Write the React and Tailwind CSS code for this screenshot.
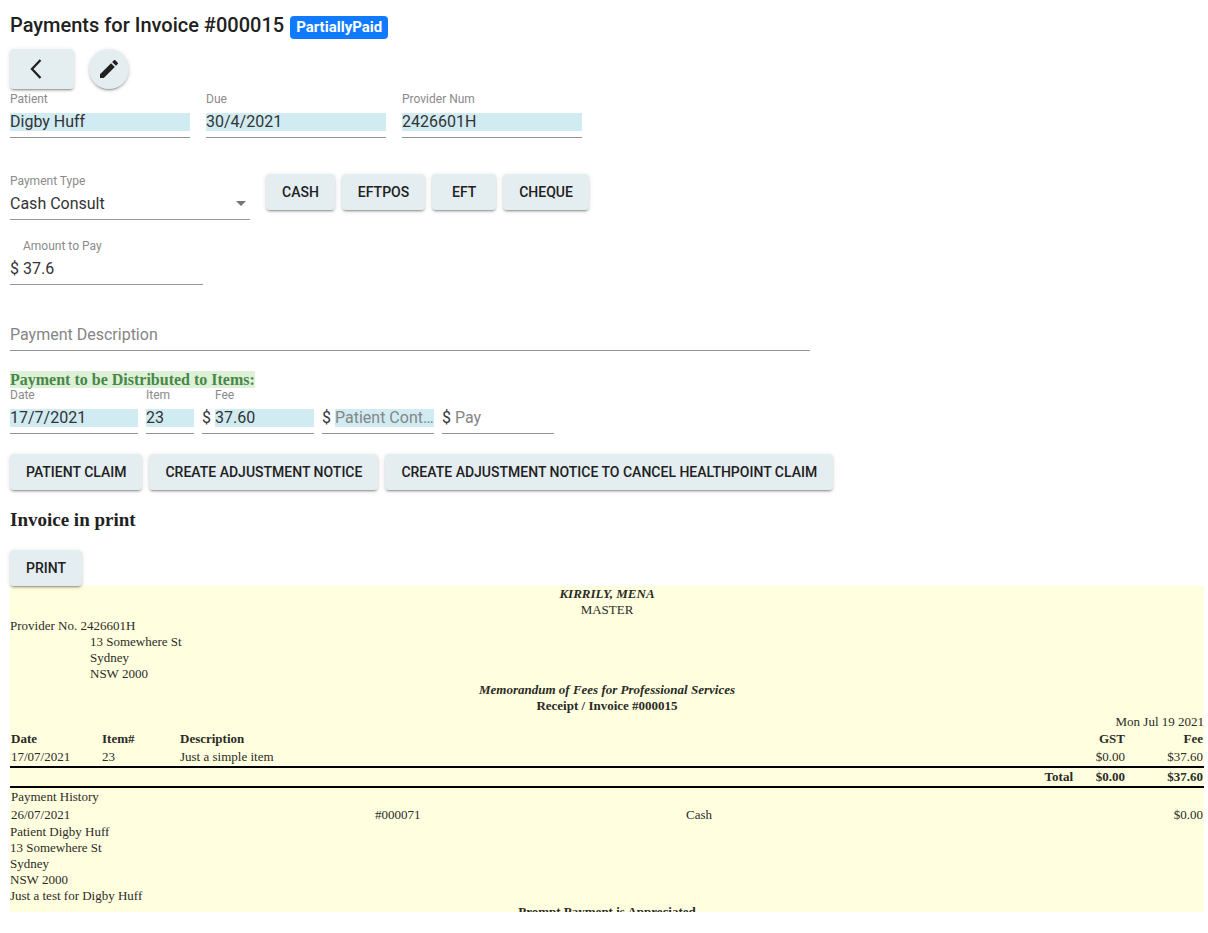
import { useState } from "react";

const paymentMethods = ["Cash", "Eftpos", "EFT", "Cheque"];

const claimActions = [
  "Patient Claim",
  "Create Adjustment Notice",
  "Create Adjustment Notice to Cancel HealthPoint Claim",
];

const invoiceItems = [
  { date: "17/07/2021", item: "23", description: "Just a simple item", gst: "$0.00", fee: "$37.60" },
];

const paymentHistory = [
  { date: "26/07/2021", number: "#000071", type: "Cash", amount: "$0.00" },
];

function Button({ children, onClick }) {
  return (
    <button
      type="button"
      onClick={onClick}
      className="h-9 min-w-16 px-4 pb-px rounded bg-[#e4edf0] text-sm font-medium uppercase whitespace-nowrap text-[#212121] shadow-[0_3px_1px_-2px_rgba(0,0,0,0.2),0_2px_2px_0_rgba(0,0,0,0.14),0_1px_5px_0_rgba(0,0,0,0.12)] hover:bg-[#d8e3e7]"
    >
      {children}
    </button>
  );
}

function Field({ id, label, value, placeholder, prefix, readOnly, onChange, className }) {
  return (
    <div className={`border-b border-[#949494] pb-1.5 ${className}`}>
      <div className={`h-4 text-xs leading-4 text-[#8a8a8a] ${prefix ? "pl-[13px]" : ""}`}>
        {!placeholder && <label htmlFor={id} className="block">{label}</label>}
      </div>
      <div className="mt-1.5 flex h-[18px] leading-[18px]">
        {prefix && <span className="w-[13px] shrink-0">{prefix}</span>}
        <input
          id={id}
          type="text"
          aria-label={label}
          value={value}
          placeholder={placeholder}
          readOnly={readOnly}
          onChange={onChange}
          className={`min-w-0 flex-1 text-ellipsis outline-none placeholder:text-[#858585] ${readOnly ? "bg-[#d1ebf2]" : ""}`}
        />
      </div>
    </div>
  );
}

export default function App() {
  const [paymentType, setPaymentType] = useState("Cash Consult");
  const [amount, setAmount] = useState("37.6");
  const [description, setDescription] = useState("");
  const [pay, setPay] = useState("");

  return (
    <div className="min-h-screen bg-white pt-[9px] pr-1 pb-5 pl-2.5 font-['Roboto',sans-serif] text-base text-[#333333]">
      {/* Header */}
      <h1 className="flex items-baseline gap-1.5 text-xl leading-8 font-medium text-[#212121]">
        Payments for Invoice #000015
        <span className="rounded bg-[#107bff] px-1.5 py-1 text-[15px] leading-[15px] font-bold text-white">
          PartiallyPaid
        </span>
      </h1>
      <div className="mt-2 flex gap-[15px] text-[#212121]">
        <button
          type="button"
          aria-label="Back"
          className="flex h-10 w-16 items-center rounded bg-[#e4edf0] pl-3.5 shadow-[0_3px_1px_-2px_rgba(0,0,0,0.2),0_2px_2px_0_rgba(0,0,0,0.14),0_1px_5px_0_rgba(0,0,0,0.12)]"
        >
          <svg className="h-6 w-6" viewBox="0 0 24 24" fill="none" stroke="currentColor" strokeWidth="2.3">
            <path d="M16.5 3L8 12l8.5 9" />
          </svg>
        </button>
        <button
          type="button"
          aria-label="Edit"
          className="flex h-10 w-10 items-center justify-center rounded-full bg-[#e4edf0] shadow-[0_3px_1px_-2px_rgba(0,0,0,0.2),0_2px_2px_0_rgba(0,0,0,0.14),0_1px_5px_0_rgba(0,0,0,0.12)]"
        >
          <svg className="h-6 w-6" viewBox="0 0 24 24" fill="currentColor">
            <path d="M3 17.25V21h3.75L17.81 9.94l-3.75-3.75L3 17.25zM20.71 7.04a1 1 0 0 0 0-1.41l-2.34-2.34a1 1 0 0 0-1.41 0l-1.83 1.83 3.75 3.75 1.83-1.83z" />
          </svg>
        </button>
      </div>

      {/* Invoice details */}
      <div className="mt-0.5 flex flex-wrap gap-4">
        <Field id="patient" label="Patient" value="Digby Huff" readOnly className="w-[180px]" />
        <Field id="due" label="Due" value="30/4/2021" readOnly className="w-[180px]" />
        <Field id="provider" label="Provider Num" value="2426601H" readOnly className="w-[180px]" />
      </div>

      {/* Payment */}
      <div className="mt-[35px] flex flex-wrap gap-4">
        <div className="w-60 border-b border-[#949494] pb-1.5">
          <label htmlFor="paymentType" className="block h-4 text-xs leading-4 text-[#8a8a8a]">
            Payment Type
          </label>
          <div className="relative mt-1.5 h-[18px]">
            <select
              id="paymentType"
              value={paymentType}
              onChange={(e) => setPaymentType(e.target.value)}
              className="block w-full appearance-none leading-[18px] outline-none"
            >
              <option>Cash Consult</option>
              <option>Card Consult</option>
            </select>
            <svg className="pointer-events-none absolute top-1.5 right-1 h-[5px] w-2.5 text-[#757575]" viewBox="0 0 10 5" fill="currentColor">
              <path d="M0 0h10L5 5z" />
            </svg>
          </div>
        </div>
        <div className="flex flex-wrap gap-[7px] pt-px">
          {paymentMethods.map((method) => (
            <Button key={method}>{method}</Button>
          ))}
        </div>
      </div>
      <Field
        id="amount"
        label="Amount to Pay"
        prefix="$"
        value={amount}
        onChange={(e) => setAmount(e.target.value)}
        className="mt-[18px] w-[193px]"
      />
      <Field
        id="description"
        label="Payment Description"
        placeholder="Payment Description"
        value={description}
        onChange={(e) => setDescription(e.target.value)}
        className="mt-[19px] w-full max-w-[800px]"
      />

      {/* Distribution */}
      <h2 className="mt-5 h-4 font-['Liberation_Serif',serif] text-base leading-[18px] font-bold text-[#468847]">
        <span className="bg-[#dff0d8]">Payment to be Distributed to Items:</span>
      </h2>
      <div className="flex flex-wrap gap-2">
        <Field id="itemDate" label="Date" value="17/7/2021" readOnly className="w-32" />
        <Field id="item" label="Item" value="23" readOnly className="w-12" />
        <Field id="fee" label="Fee" prefix="$" value="37.60" readOnly className="w-28" />
        <Field
          id="contribution"
          label="Patient Contribution"
          placeholder="Patient Contribution"
          prefix="$"
          value=""
          readOnly
          className="w-28"
        />
        <Field
          id="pay"
          label="Pay"
          placeholder="Pay"
          prefix="$"
          value={pay}
          onChange={(e) => setPay(e.target.value)}
          className="w-28"
        />
      </div>
      <div className="mt-5 flex flex-wrap gap-[7px]">
        {claimActions.map((action) => (
          <Button key={action}>{action}</Button>
        ))}
      </div>

      {/* Printable invoice */}
      <h3 className="mt-5 mb-5 font-['Liberation_Serif',serif] text-[19px] leading-5 font-bold text-[#212121]">
        Invoice in print
      </h3>
      <Button onClick={() => window.print()}>Print</Button>
      <div className="h-[326px] overflow-hidden bg-[#ffffe0] font-['Liberation_Serif',serif] text-[13px] leading-4 text-[#2b2b26]">
        <div className="text-center">
          <p className="font-bold italic">KIRRILY, MENA</p>
          <p>MASTER</p>
        </div>
        <p>Provider No. 2426601H</p>
        <address className="pl-20 not-italic">
          13 Somewhere St
          <br />
          Sydney
          <br />
          NSW 2000
        </address>
        <div className="text-center font-bold">
          <p className="italic">Memorandum of Fees for Professional Services</p>
          <p>Receipt / Invoice #000015</p>
        </div>
        <p className="text-right">Mon Jul 19 2021</p>
        <table className="w-full table-fixed">
          <thead>
            <tr className="text-left">
              <th className="w-[91px] p-px">Date</th>
              <th className="w-[78px] p-px">Item#</th>
              <th className="p-px">Description</th>
              <th className="w-[52px] p-px text-right">GST</th>
              <th className="w-[78px] p-px text-right">Fee</th>
            </tr>
          </thead>
          <tbody>
            {invoiceItems.map((row) => (
              <tr key={row.item}>
                <td className="p-px">{row.date}</td>
                <td className="p-px">{row.item}</td>
                <td className="p-px">{row.description}</td>
                <td className="p-px text-right">{row.gst}</td>
                <td className="p-px text-right">{row.fee}</td>
              </tr>
            ))}
          </tbody>
          <tfoot>
            <tr className="border-y-2 border-black text-right font-bold">
              <td colSpan={3} className="p-px">Total</td>
              <td className="p-px">$0.00</td>
              <td className="p-px">$37.60</td>
            </tr>
          </tfoot>
        </table>
        <table className="w-full table-fixed">
          <caption className="p-px text-left">Payment History</caption>
          <tbody>
            {paymentHistory.map((row) => (
              <tr key={row.number}>
                <td className="w-[364px] p-px">{row.date}</td>
                <td className="w-[311px] p-px">{row.number}</td>
                <td className="p-px">{row.type}</td>
                <td className="p-px text-right">{row.amount}</td>
              </tr>
            ))}
          </tbody>
        </table>
        <p>Patient Digby Huff</p>
        <p>13 Somewhere St</p>
        <p>Sydney</p>
        <p>NSW 2000</p>
        <p>Just a test for Digby Huff</p>
        <p className="text-center font-bold">Prompt Payment is Appreciated</p>
      </div>
    </div>
  );
}
